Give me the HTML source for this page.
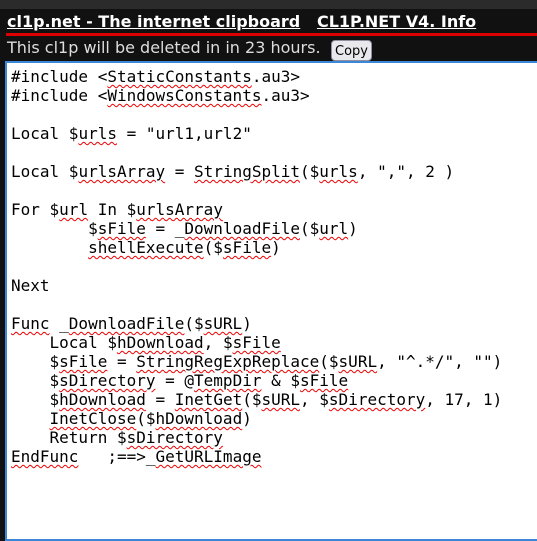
<!DOCTYPE html>
<html><head><meta charset="utf-8"><style>
html,body{margin:0;padding:0;width:537px;height:531px;overflow:hidden;background:#111;}
.top{position:absolute;left:0;top:0;width:537px;height:9px;background:#2b2b2b;}
.h{position:absolute;left:7px;top:12px;font:bold 16px "DejaVu Sans",sans-serif;color:#fff;white-space:nowrap;}
.h span{text-decoration:underline;}
.red{position:absolute;left:6px;top:33px;width:531px;height:3px;background:#d00;}
.sub{position:absolute;left:7px;top:38px;font:16px "DejaVu Sans",sans-serif;color:#ddd;white-space:nowrap;}
.btn{position:absolute;left:331px;top:40px;width:41px;height:21px;background:#e9e9ed;border:1px solid #8f8f9d;border-radius:4px;box-sizing:border-box;font:13px "DejaVu Sans",sans-serif;color:#000;text-align:center;line-height:21px;}
.ta{position:absolute;left:5px;top:61px;width:540px;height:480px;background:#fff;border:2px solid #3b86d6;box-sizing:border-box;}
pre{position:absolute;left:11px;top:67px;margin:0;font:16px/19px "DejaVu Sans Mono",monospace;color:#000;}
u{text-decoration:underline wavy #e00;text-decoration-thickness:1px;text-underline-offset:2px;}
</style></head><body>
<div class="top"></div>
<div class="h"><span>cl1p.net - The internet clipboard</span>&nbsp;&nbsp; <span>CL1P.NET V4. Info</span></div>
<div class="red"></div>
<div class="sub">This cl1p will be deleted in in 23 hours.</div>
<div class="btn">Copy</div>
<div class="ta"></div>
<pre>#include &lt;<u>StaticConstants</u>.au3&gt;
#include &lt;<u>WindowsConstants</u>.au3&gt;

Local $<u>urls</u> = "url1,url2"

Local $<u>urlsArray</u> = <u>StringSplit</u>($<u>urls</u>, ",", 2 )

For $<u>url</u> In $<u>urlsArray</u>
        $<u>sFile</u> = _<u>DownloadFile</u>($<u>url</u>)
        <u>shellExecute</u>($<u>sFile</u>)

Next

<u>Func</u> _<u>DownloadFile</u>($<u>sURL</u>)
    Local $<u>hDownload</u>, $<u>sFile</u>
    $<u>sFile</u> = <u>StringRegExpReplace</u>($<u>sURL</u>, "^.*/", "")
    $<u>sDirectory</u> = @<u>TempDir</u> &amp; $<u>sFile</u>
    $<u>hDownload</u> = <u>InetGet</u>($<u>sURL</u>, $<u>sDirectory</u>, 17, 1)
    <u>InetClose</u>($<u>hDownload</u>)
    Return $<u>sDirectory</u>
<u>EndFunc</u>   ;==&gt;_<u>GetURLImage</u></pre>
</body></html>
